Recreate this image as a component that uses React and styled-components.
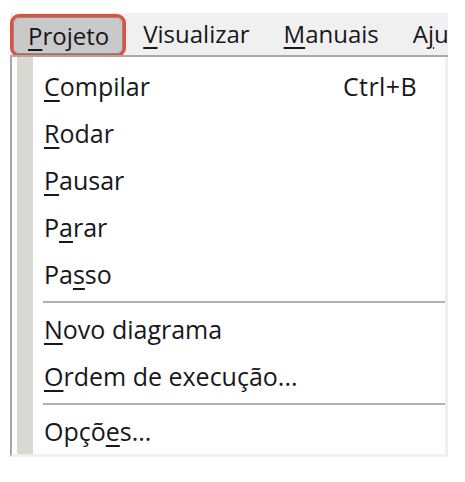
import React from "react"
import styled, { createGlobalStyle } from "styled-components"

const GlobalStyle = createGlobalStyle`
  body {
    margin: 0;
    background: #ffffff;
    font-family: "Open Sans", "Noto Sans", sans-serif;
  }
`

const Page = styled.div`
  padding: 13px 0 0 10px;
  width: 438px;
  color: #17171c;
  font-size: 24px;
`

const MenuBar = styled.div`
  display: flex;
  height: 42px;
  background: #f0f0f0;
  border-bottom: 2px solid #a9a9a9;
  overflow: hidden;
  white-space: nowrap;
`

const BarItem = styled.div`
  display: flex;
  align-items: center;
  flex-shrink: 0;
  padding: 0 17px;
  line-height: 1;
  ${props =>
    props.active &&
    `
    padding: 0 14px 0 15px;
    margin-top: 1px;
    height: 37px;
    background: #c9c9c9;
    border: 3px solid #e0513d;
    border-radius: 9px;
    box-shadow: inset 0 0 0 1px #8e8e8e;
    position: relative;
    z-index: 1;
  `}
`

const Key = styled.span`
  text-decoration: underline;
  text-decoration-thickness: 2px;
  text-underline-offset: 4px;
`

const Dropdown = styled.div`
  display: flex;
  background: #ffffff;
  border-left: 2px solid #a6a6a6;
  border-right: 3px solid #efefef;
  border-bottom: 3px solid #efefef;
`

const Gutter = styled.div`
  width: 16px;
  margin-left: 5px;
  background: #d9d9d2;
`

const List = styled.div`
  flex: 1;
  padding: 5px 0 0 11px;
  font-size: 25px;
`

const Item = styled.div`
  display: flex;
  align-items: center;
  justify-content: space-between;
  height: 47px;
  padding-right: 28px;
`

const Shortcut = styled.span`
  letter-spacing: 0.4px;
`

const Separator = styled.div`
  height: 2px;
  margin: 4px 0 2px -1px;
  background: #b1b1b1;
`

const Label = ({ text, at }) => (
  <span>
    {text.slice(0, at)}
    <Key>{text[at]}</Key>
    {text.slice(at + 1)}
  </span>
)

const bar = [
  { text: "Projeto", at: 0, active: true },
  { text: "Visualizar", at: 0 },
  { text: "Manuais", at: 0 },
  { text: "Aju", at: 1 },
]

const groups = [
  [
    { text: "Compilar", at: 0, shortcut: "Ctrl+B" },
    { text: "Rodar", at: 0 },
    { text: "Pausar", at: 0 },
    { text: "Parar", at: 1 },
    { text: "Passo", at: 2 },
  ],
  [
    { text: "Novo diagrama", at: 0 },
    { text: "Ordem de execução...", at: 0 },
  ],
  [{ text: "Opções...", at: 4 }],
]

const App = () => (
  <Page>
    <GlobalStyle />
    <MenuBar>
      {bar.map(b => (
        <BarItem key={b.text} active={b.active}>
          <Label text={b.text} at={b.at} />
        </BarItem>
      ))}
    </MenuBar>
    <Dropdown>
      <Gutter />
      <List>
        {groups.map((g, i) => (
          <React.Fragment key={i}>
            {i > 0 && <Separator />}
            {g.map(item => (
              <Item key={item.text}>
                <Label text={item.text} at={item.at} />
                {item.shortcut && <Shortcut>{item.shortcut}</Shortcut>}
              </Item>
            ))}
          </React.Fragment>
        ))}
      </List>
    </Dropdown>
  </Page>
)

export default App
